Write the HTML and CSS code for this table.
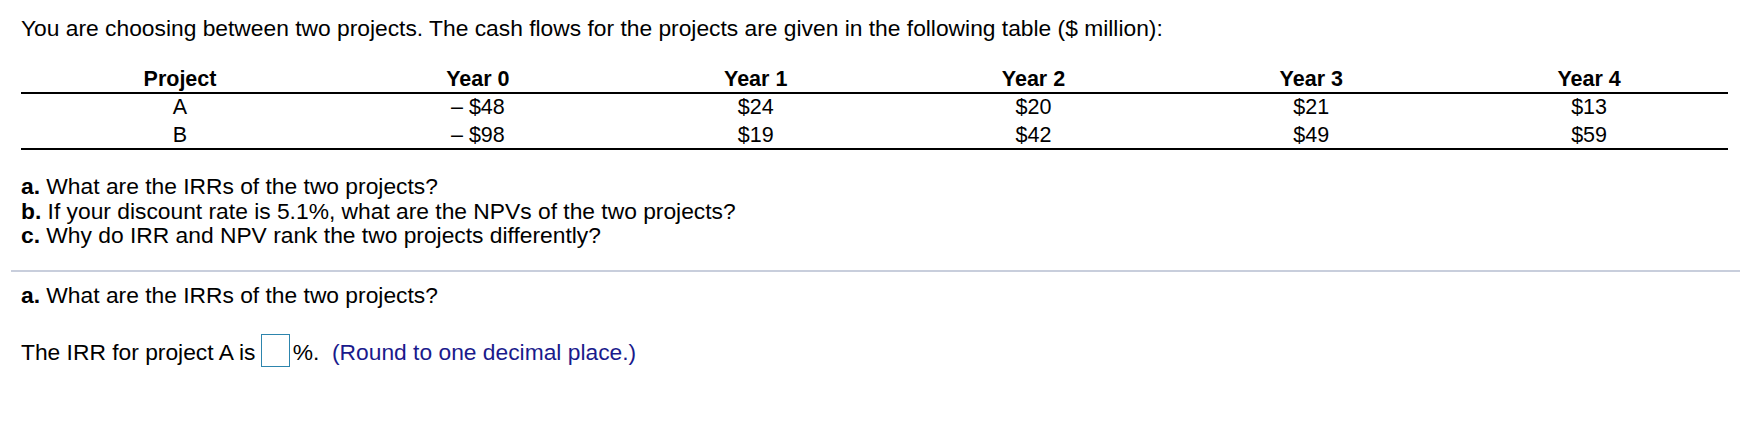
FILE: index.html
```html
<!DOCTYPE html>
<html lang="en">
<head>
<meta charset="utf-8">
<title>IRR question</title>
<link rel="stylesheet" href="styles.css">
</head>
<body>
<div class="page">
  <div class="question">
    <p class="intro">You are choosing between two projects. The cash flows for the projects are given in the following table ($ million):</p>
    <table class="cash">
      <colgroup>
        <col class="c-proj">
        <col><col><col><col><col>
      </colgroup>
      <thead>
        <tr><th>Project</th><th>Year 0</th><th>Year 1</th><th>Year 2</th><th>Year 3</th><th>Year 4</th></tr>
      </thead>
      <tbody>
        <tr><td>A</td><td>&#8211; $48</td><td>$24</td><td>$20</td><td>$21</td><td>$13</td></tr>
        <tr><td>B</td><td>&#8211; $98</td><td>$19</td><td>$42</td><td>$49</td><td>$59</td></tr>
      </tbody>
    </table>
    <div class="parts">
      <div><b>a.</b> What are the IRRs of the two projects?</div>
      <div><b>b.</b> If your discount rate is 5.1%, what are the NPVs of the two projects?</div>
      <div><b>c.</b> Why do IRR and NPV rank the two projects differently?</div>
    </div>
  </div>
  <hr class="sep">
  <div class="answer">
    <div class="part-title"><b>a.</b> What are the IRRs of the two projects?</div>
    <div class="answer-line"><span class="txt">The IRR for project A is </span><span class="box"></span><span class="txt">%.&nbsp; </span><span class="txt hint">(Round to one decimal place.)</span></div>
  </div>
</div>
</body>
</html>
```
FILE: styles.css
```css
html, body {
  margin: 0;
  padding: 0;
  background: #fff;
}
body {
  font-family: "Liberation Sans", Arial, sans-serif;
  font-size: 22.8px;
  line-height: 26px;
  color: #000;
}
.page {
  padding: 15px 8px 0 11px;
}
.question {
  padding: 0 12px 0 10px;
}
.intro {
  margin: 0 0 25px 0;
}
.cash {
  width: 100%;
  border-collapse: collapse;
  table-layout: fixed;
  font-size: 21.5px;
  line-height: 26px;
}
.c-proj {
  width: 318px;
}
.cash th, .cash td {
  text-align: center;
  padding: 0 0 2px 0;
  font-weight: normal;
}
.cash th {
  font-weight: bold;
  padding: 0;
  border-bottom: 2px solid #000;
}
.cash tbody tr:last-child td {
  padding-bottom: 0;
  border-bottom: 2px solid #000;
}
.parts {
  margin-top: 24px;
  line-height: 24.5px;
}
.sep {
  border: 0;
  border-top: 2px solid #c8cedc;
  margin: 22px 0 0 0;
}
.answer {
  padding: 0 0 0 10px;
  line-height: 24.5px;
}
.part-title {
  margin-top: 11px;
}
.answer-line {
  margin-top: 27px;
  display: flex;
  align-items: center;
  white-space: pre;
}
.txt {
  padding-top: 3px;
}
.box {
  width: 27px;
  height: 31px;
  border: 1px solid #2d85ad;
  margin: 0 3px 0 -1px;
}
.hint {
  color: #1a1a8c;
}
```
